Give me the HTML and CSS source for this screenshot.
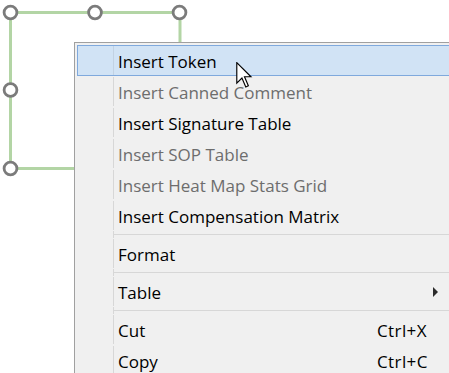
FILE: index.html
```html
<!DOCTYPE html>
<html>
<head>
<meta charset="utf-8">
<link rel="stylesheet" href="styles.css">
</head>
<body>
<div class="canvas">
  <svg class="shape" width="449" height="373" viewBox="0 0 449 373">
    <polyline class="edge" points="180,43 180,12.5 10.5,12.5 10.5,168.5 80,168.5"/>
    <circle class="handle" cx="10.5" cy="12.5" r="6.4"/>
    <circle class="handle" cx="95" cy="12.5" r="6.4"/>
    <circle class="handle" cx="179.5" cy="12.5" r="6.4"/>
    <circle class="handle" cx="10.5" cy="90" r="6.4"/>
    <circle class="handle" cx="10.5" cy="168.5" r="6.4"/>
  </svg>

  <div class="menu">
    <div class="item active"><span class="gutter"></span><span class="label">Insert Token</span><span class="key"></span><span class="sub"></span></div>
    <div class="item disabled"><span class="gutter"></span><span class="label">Insert Canned Comment</span><span class="key"></span><span class="sub"></span></div>
    <div class="item"><span class="gutter"></span><span class="label">Insert Signature Table</span><span class="key"></span><span class="sub"></span></div>
    <div class="item disabled"><span class="gutter"></span><span class="label">Insert SOP Table</span><span class="key"></span><span class="sub"></span></div>
    <div class="item disabled"><span class="gutter"></span><span class="label">Insert Heat Map Stats Grid</span><span class="key"></span><span class="sub"></span></div>
    <div class="item"><span class="gutter"></span><span class="label">Insert Compensation Matrix</span><span class="key"></span><span class="sub"></span></div>
    <div class="sep"><span class="gutter"></span><span class="line"></span></div>
    <div class="item"><span class="gutter"></span><span class="label">Format</span><span class="key"></span><span class="sub"></span></div>
    <div class="sep"><span class="gutter"></span><span class="line"></span></div>
    <div class="item"><span class="gutter"></span><span class="label">Table</span><span class="key"></span><span class="sub"><span class="arrow"></span></span></div>
    <div class="sep"><span class="gutter"></span><span class="line"></span></div>
    <div class="item"><span class="gutter"></span><span class="label">Cut</span><span class="key">Ctrl+X</span><span class="sub"></span></div>
    <div class="item"><span class="gutter"></span><span class="label">Copy</span><span class="key">Ctrl+C</span><span class="sub"></span></div>
  </div>

  <svg class="cursor" width="17" height="27" viewBox="0 0 13 21">
    <path d="M0.5,0.5 L0.5,16.5 L4.5,12.5 L7.5,19.5 L9.5,18.5 L6.5,11.5 L11.5,11.5 Z" fill="#fff" stroke="#000" stroke-width="0.9" stroke-linejoin="miter"/>
  </svg>
</div>
</body>
</html>
```
FILE: styles.css
```css
html, body {
  margin: 0;
  padding: 0;
  background: #ffffff;
}
body {
  width: 449px;
  height: 373px;
  overflow: hidden;
  font-family: "Open Sans", "Noto Sans", sans-serif;
}
.canvas {
  position: relative;
  width: 449px;
  height: 373px;
  overflow: hidden;
}
.shape {
  position: absolute;
  left: 0;
  top: 0;
}
.edge {
  fill: none;
  stroke: #b3d5a5;
  stroke-width: 3;
}
.handle {
  fill: #ffffff;
  stroke: #7b7b7b;
  stroke-width: 2.8;
}
.menu {
  position: absolute;
  left: 74px;
  top: 42px;
  width: 420px;
  background: #f0f0f0;
  border: 1px solid #a0a0a0;
  padding: 2px;
  display: flex;
  flex-direction: column;
}
.item {
  height: 31px;
  box-sizing: border-box;
  border: 1px solid transparent;
  display: flex;
  align-items: center;
  font-size: 17px;
  color: #000;
}
.item.active {
  background: #d1e3f5;
  border-color: #7fa9dd;
}
.item.disabled {
  color: #6d6d6d;
}
.gutter {
  width: 35px;
  align-self: stretch;
  border-right: 1px solid #d7d7d7;
  flex: none;
}
.item.active .gutter {
  border-right-color: #c2d2e3;
}
.label,
.key {
  padding-top: 2px;
}
.label {
  width: 259px;
  padding-left: 4px;
  flex: none;
  white-space: nowrap;
}
.key {
  width: 56px;
  flex: none;
  white-space: nowrap;
  letter-spacing: 0.4px;
}
.sub {
  flex: 1;
  display: flex;
  align-items: center;
}
.arrow {
  width: 0;
  height: 0;
  border-top: 5px solid transparent;
  border-bottom: 5px solid transparent;
  border-left: 5px solid #2b2b2b;
}
.sep {
  height: 7px;
  display: flex;
  padding-left: 1px;
}
.sep .gutter {
  width: 35px;
}
.sep .line {
  flex: 1;
  height: 1px;
  margin-top: 3px;
  background: #d7d7d7;
}
.cursor {
  position: absolute;
  left: 236px;
  top: 62px;
}
```
